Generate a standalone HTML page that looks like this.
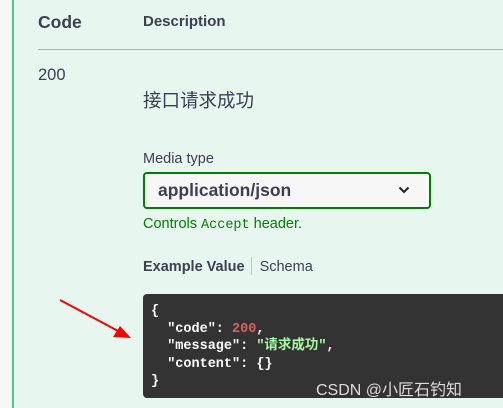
<!DOCTYPE html>
<html><head><meta charset="utf-8"><style>
html,body{margin:0;padding:0}
body{width:503px;height:408px;position:relative;overflow:hidden;background:#e8f6f0;font-family:"Liberation Sans","Noto Sans CJK SC",sans-serif;color:#3b4151}
.left{position:absolute;left:0;top:0;width:12px;height:408px;background:#f7f7f7;border-right:2px solid #49cc90}
.t{position:absolute;white-space:nowrap}
.hr{position:absolute;left:38px;top:49px;width:465px;height:1px;background:#a8b3ae}
.sel{position:absolute;left:143px;top:172px;width:284px;height:33px;border:2px solid #008000;border-radius:4px;background:#f7f7f7;box-sizing:content-box}
.code{position:absolute;left:143px;top:294px;width:370px;height:104px;background:#333;border-radius:4px}
.code pre{margin:0;padding:9px 0 0 8px;font-family:"Liberation Mono","Noto Sans CJK SC",monospace;font-weight:bold;font-size:13.5px;line-height:17.5px;color:#fff}
</style></head><body>
<div class="left"></div>
<div class="t" style="left:38px;top:12px;font-size:17.5px;font-weight:bold">Code</div>
<div class="t" style="left:143px;top:13px;font-size:15px;font-weight:bold">Description</div>
<div class="hr"></div>
<div class="t" style="left:38px;top:66px;font-size:16.5px">200</div>
<div class="t" style="left:143px;top:87px;font-size:18.5px">接口请求成功</div>
<div class="t" style="left:143px;top:151px;font-size:14.5px">Media type</div>
<div class="sel">
<div class="t" style="left:13px;top:6px;font-size:17.5px;font-weight:bold">application/json</div>
<svg style="position:absolute;left:253px;top:11px" width="12" height="10" viewBox="0 0 12 10"><path d="M1.5 2.5 L6 7 L10.5 2.5" fill="none" stroke="#222" stroke-width="2"/></svg>
</div>
<div class="t" style="left:143px;top:216px;font-size:14.5px;color:#008000">Controls <span style="font-family:'Liberation Mono',monospace;font-size:13.5px">Accept</span> header.</div>
<div class="t" style="left:143px;top:257px;font-size:14.5px"><b>Example Value</b><span style="display:inline-block;width:1px;height:18px;background:#c5c5c5;margin:0 8px 0 6px;vertical-align:-4px"></span>Schema</div>
<div class="code"><pre>{
  "code": <span style="color:#d36363">200</span>,
  "message": <span style="color:#a2fca2">"请求成功"</span>,
  "content": {}
}</pre></div>
<svg style="position:absolute;left:0;top:0" width="503" height="408"><line x1="60" y1="300" x2="120" y2="332" stroke="#f00" stroke-width="2"/><polygon points="131,338 113,337 120,326" fill="#f00"/></svg>
<div class="t" style="left:316px;top:376px;font-size:16px;color:#ddd">CSDN @小匠石钓知</div>
</body></html>
